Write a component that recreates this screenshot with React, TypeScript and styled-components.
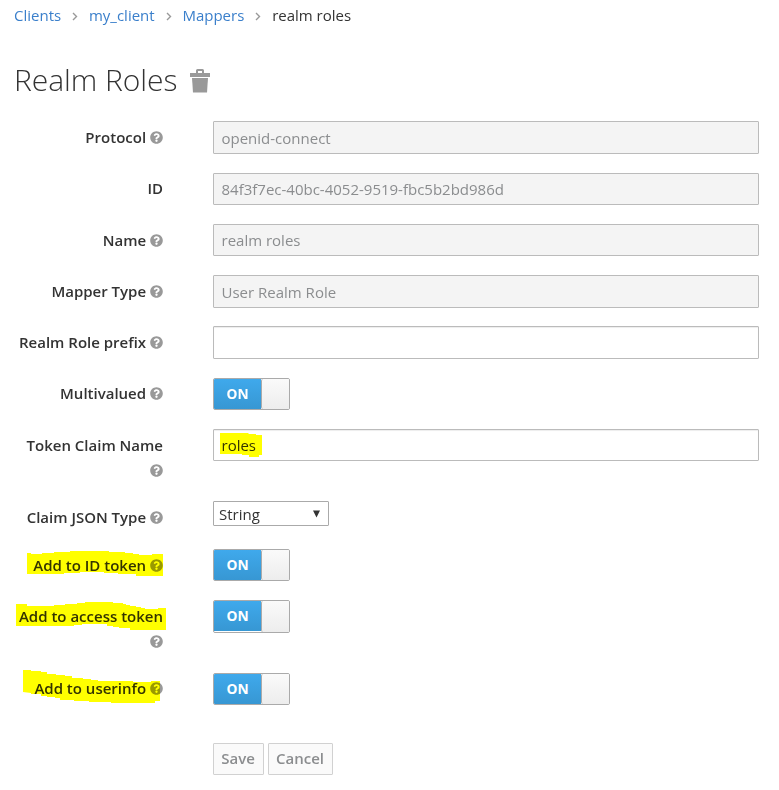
import React from "react";
import styled, { createGlobalStyle } from "styled-components";
import { FaQuestionCircle } from "react-icons/fa";

const GlobalStyle = createGlobalStyle`
  * { box-sizing: border-box; }
  body {
    margin: 0;
    background: #fff;
    color: #333;
    font-family: "Open Sans", Helvetica, Arial, sans-serif;
    font-size: 15px;
    line-height: 25px;
  }
`;

const Page = styled.main`
  width: 779px;
  height: 790px;
  padding: 3px 20px 0 14px;
  overflow: hidden;
`;

const Breadcrumb = styled.ol`
  display: flex;
  align-items: center;
  height: 25px;
  margin: 0;
  padding: 0;
  list-style: none;
`;

const Crumb = styled.li`
  display: flex;
  align-items: center;
  white-space: nowrap;
`;

const CrumbLink = styled.a`
  color: #3a7fcb;
  text-decoration: none;
`;

const Separator = styled.svg`
  width: 6px;
  height: 9px;
  margin: 2px 10.8px 0 11px;
  fill: none;
  stroke: #999;
  stroke-width: 1.4;
`;

const Title = styled.h1`
  display: flex;
  align-items: center;
  height: 40px;
  margin: 32px 0 21px;
  font-size: 30px;
  font-weight: 300;
  line-height: 40px;
  letter-spacing: -0.05px;
  white-space: nowrap;
`;

const Trash = styled.svg`
  width: 20px;
  height: 24px;
  margin-left: 13px;
  margin-top: 1px;
  fill: #999;
`;

const Row = styled.div<{ $height: number }>`
  display: grid;
  grid-template-columns: 149px 546px;
  column-gap: 50px;
  align-items: start;
  height: ${(p) => p.$height}px;
`;

const Label = styled.label<{ $offset: number }>`
  position: relative;
  padding-top: ${(p) => p.$offset}px;
  font-weight: 600;
  text-align: right;
`;

const HelpIcon = styled(FaQuestionCircle)`
  width: 13px;
  height: 13px;
  color: #999;
  vertical-align: -1px;
`;

const Marker = styled.svg<{ $left: number; $top: number }>`
  position: absolute;
  left: ${(p) => p.$left}px;
  top: ${(p) => p.$top}px;
  fill: #ff0;
  mix-blend-mode: multiply;
  pointer-events: none;
`;

const Field = styled.div`
  position: relative;
  display: flex;
`;

const TextInput = styled.input<{ $height: number }>`
  width: 546px;
  height: ${(p) => p.$height}px;
  padding: 0 7.5px;
  border: 1px solid #bbb;
  border-radius: 1px;
  background: #fff;
  box-shadow: inset 0 1px 1px rgba(0, 0, 0, 0.075);
  color: #333;
  font: inherit;
  outline: 0;

  &:disabled {
    background: #f4f4f4;
    box-shadow: none;
    color: #8b8d8f;
  }
`;

const Switch = styled.button<{ $height: number }>`
  display: flex;
  width: 77px;
  height: ${(p) => p.$height}px;
  padding: 0;
  overflow: hidden;
  border: 1px solid #aaa;
  border-radius: 2px;
  background: #fff;
  font: inherit;
`;

const SwitchOn = styled.span`
  flex: 0 0 47px;
  height: 30px;
  background: linear-gradient(#3fa9ec, #3797d3);
  color: #fff;
  font-size: 13.75px;
  font-weight: 700;
  line-height: 29px;
  text-align: center;
`;

const SwitchKnob = styled.span`
  flex: 1;
  align-self: stretch;
  border-left: 1px solid #aaa;
  border-radius: 2px 0 0 2px;
  background: linear-gradient(#fafafa, #ededed);
`;

const Select = styled.div`
  display: flex;
  align-items: center;
  justify-content: space-between;
  width: 116px;
  height: 25px;
  padding: 2px 7px 0 5px;
  border: 1px solid #aaa;
  border-radius: 1px;
`;

const Caret = styled.svg`
  width: 8px;
  height: 8px;
  margin-top: -1px;
  fill: #333;
`;

const Actions = styled.div`
  display: flex;
  gap: 4px;
`;

const Button = styled.button<{ $width: number }>`
  width: ${(p) => p.$width}px;
  height: 32px;
  padding: 0 1px 2px 0;
  border: 1px solid #d1d1d1;
  border-radius: 1px;
  background: #fafafa;
  color: #8b8d8f;
  font: inherit;
  font-weight: 600;
`;

type Stroke = { left: number; top: number; width: number; height: number; points: string };

type RowData = {
  label: string;
  height: number;
  offset?: number;
  help?: boolean;
  control: "disabled" | "text" | "switch" | "select";
  size: number;
  value?: string;
  labelMark?: Stroke;
  valueMark?: Stroke;
};

const rows: RowData[] = [
  { label: "Protocol", height: 52, help: true, control: "disabled", size: 33, value: "openid-connect" },
  { label: "ID", height: 51, offset: 3, control: "disabled", size: 32, value: "84f3f7ec-40bc-4052-9519-fbc5b2bd986d" },
  { label: "Name", height: 51, help: true, control: "disabled", size: 32, value: "realm roles" },
  { label: "Mapper Type", height: 51, help: true, control: "disabled", size: 33, value: "User Realm Role" },
  { label: "Realm Role prefix", height: 52, help: true, control: "text", size: 33, value: "" },
  { label: "Multivalued", height: 51, offset: 3, help: true, control: "switch", size: 32 },
  {
    label: "Token Claim Name", height: 72, help: true, control: "text", size: 32, value: "roles",
    valueMark: { left: 7, top: 4, width: 42, height: 24, points: "0,0 28,0 29,1 36,1 36,2 42,2 42,22 39,22 39,24 29,24 29,22 22,22 22,21 0,21" },
  },
  { label: "Claim JSON Type", height: 48, help: true, control: "select", size: 25, value: "String" },
  {
    label: "Add to ID token", height: 51, help: true, control: "switch", size: 32,
    labelMark: { left: 13, top: 2, width: 136, height: 25, points: "0,2 4,2 4,3 15,3 15,2 27,2 27,1 43,1 43,0 82,0 82,1 98,1 98,2 106,2 106,3 112,3 112,4 125,4 125,3 136,3 136,25 109,25 109,23 91,23 91,22 77,22 77,21 53,21 53,22 37,22 37,23 0,23" },
  },
  {
    label: "Add to access token", height: 73, help: true, control: "switch", size: 33,
    labelMark: { left: 2, top: 2, width: 150, height: 28, points: "0,2 11,2 11,4 38,4 38,3 49,3 49,2 61,2 61,1 69,1 69,0 97,0 97,1 107,1 107,2 110,2 110,3 114,3 114,4 120,4 120,5 125,5 125,6 129,6 129,7 142,7 142,6 150,6 150,28 114,28 114,26 103,26 103,25 97,25 97,24 91,24 91,22 66,22 66,23 58,23 58,24 0,24" },
  },
  {
    label: "Add to userinfo", height: 70, offset: 3, help: true, control: "switch", size: 32,
    labelMark: { left: 9, top: -3, width: 137, height: 33, points: "0,0 8,0 8,1 18,1 18,2 24,2 24,4 33,4 33,5 42,5 42,6 49,6 49,8 60,8 60,9 68,9 68,10 75,10 75,11 110,11 110,12 128,12 128,11 137,11 137,31 132,31 132,33 88,33 88,32 66,32 66,31 51,31 51,30 37,30 37,28 32,28 32,27 24,27 24,26 18,26 18,24 8,24 8,23 0,22" },
  },
];

function Highlight({ stroke }: { stroke: Stroke }) {
  return (
    <Marker
      $left={stroke.left}
      $top={stroke.top}
      width={stroke.width}
      height={stroke.height}
      aria-hidden="true"
    >
      <polygon points={stroke.points} />
    </Marker>
  );
}

function Control({ row }: { row: RowData }) {
  if (row.control === "switch") {
    return (
      <Switch $height={row.size} type="button" role="switch" aria-checked="true">
        <SwitchOn>ON</SwitchOn>
        <SwitchKnob />
      </Switch>
    );
  }
  if (row.control === "select") {
    return (
      <Select role="combobox">
        {row.value}
        <Caret viewBox="0 0 8 8"><path d="M0 .5h7L3.500 7.500z" /></Caret>
      </Select>
    );
  }
  return <TextInput $height={row.size} defaultValue={row.value} disabled={row.control === "disabled"} />;
}

export default function App() {
  return (
    <Page>
      <GlobalStyle />
      <Breadcrumb>
        {["Clients", "my_client", "Mappers"].map((name) => (
          <Crumb key={name}>
            <CrumbLink>{name}</CrumbLink>
            <Separator viewBox="0 0 6 9"><path d="M1 1l3.5 3.5L1 8" /></Separator>
          </Crumb>
        ))}
        <Crumb>realm roles</Crumb>
      </Breadcrumb>
      <Title>
        Realm Roles
        <Trash viewBox="0 0 20 24">
          <path d="M0 4h6V1.5Q6 0 7.500 0h5Q14 0 14 1.500V4h6v4H0zM8 2v2h4V2z" />
          <path d="M2 9h16l-1 14.500H3z" />
        </Trash>
      </Title>
      {rows.map((row) => (
        <Row key={row.label} $height={row.height}>
          <Label $offset={row.offset ?? 4}>
            {row.label} {row.help && <HelpIcon />}
            {row.labelMark && <Highlight stroke={row.labelMark} />}
          </Label>
          <Field>
            <Control row={row} />
            {row.valueMark && <Highlight stroke={row.valueMark} />}
          </Field>
        </Row>
      ))}
      <Row $height={32}>
        <span />
        <Actions>
          <Button $width={51} type="button">Save</Button>
          <Button $width={65} type="button">Cancel</Button>
        </Actions>
      </Row>
    </Page>
  );
}
